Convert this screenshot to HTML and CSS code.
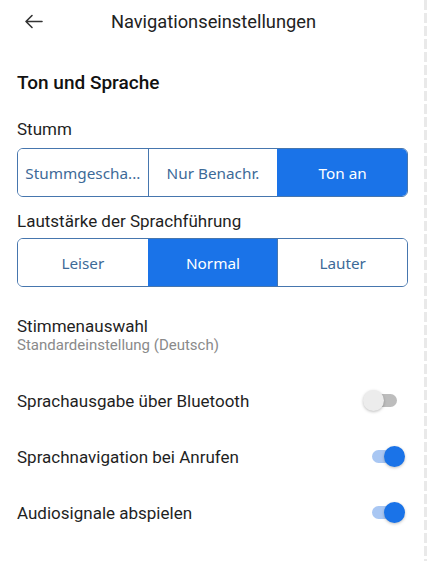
FILE: index.html
```html
<!DOCTYPE html>
<html lang="de">
<head>
  <meta charset="UTF-8">
  <title>Navigationseinstellungen</title>
  <link rel="stylesheet" href="styles.css">
</head>
<body>

  <header class="top-bar">
    <button class="back-btn" aria-label="Zurück">
      <svg width="19" height="15" viewBox="0 0 19 15">
        <path d="M18 7.5H2M8 1.5L2 7.5l6 6" fill="none" stroke="#333" stroke-width="1.6" stroke-linecap="round" stroke-linejoin="round"/>
      </svg>
    </button>
    <h1 class="title">Navigationseinstellungen</h1>
    <span></span>
  </header>

  <main class="settings">
    <h2 class="section-title">Ton und Sprache</h2>

    <p class="label label-first">Stumm</p>
    <div class="segmented">
      <button class="seg">Stummgescha...</button>
      <button class="seg">Nur Benachr.</button>
      <button class="seg active">Ton an</button>
    </div>

    <p class="label label-second">Lautstärke der Sprachführung</p>
    <div class="segmented">
      <button class="seg">Leiser</button>
      <button class="seg active">Normal</button>
      <button class="seg">Lauter</button>
    </div>

    <div class="voice">
      <p class="voice-name">Stimmenauswahl</p>
      <p class="voice-sub">Standardeinstellung (Deutsch)</p>
    </div>

    <div class="toggle-list">
      <div class="toggle-row">
        <span>Sprachausgabe über Bluetooth</span>
        <span class="switch"><span class="track"></span><span class="thumb"></span></span>
      </div>
      <div class="toggle-row">
        <span>Sprachnavigation bei Anrufen</span>
        <span class="switch on"><span class="track"></span><span class="thumb"></span></span>
      </div>
      <div class="toggle-row">
        <span>Audiosignale abspielen</span>
        <span class="switch on"><span class="track"></span><span class="thumb"></span></span>
      </div>
    </div>
  </main>

</body>
</html>
```

FILE: styles.css
```css
body {
  margin: 0;
  padding: 0;
  background: #fff;
  font-family: Roboto, 'Noto Sans', sans-serif;
  color: #1f1f1f;
}

/* scroll hint on the right edge */
body::after {
  content: '';
  position: fixed;
  top: 0;
  right: 0;
  bottom: 0;
  width: 3px;
  background: repeating-linear-gradient(to bottom, #e9e9e9 0 10px, transparent 10px 13px);
}

.top-bar {
  height: 42px;
  display: grid;
  grid-template-columns: 1fr auto 1fr;
  align-items: center;
}

.back-btn {
  justify-self: start;
  margin-left: 24px;
  padding: 0;
  border: none;
  background: none;
  display: flex;
}

.title {
  margin: 0;
  font-size: 18.3px;
  font-weight: 400;
  color: #222;
}

.settings {
  padding: 0 19px 0 17px;
}

.section-title {
  margin: 29px 0 0;
  font-size: 19px;
  font-weight: 500;
  line-height: 24px;
  color: #111;
}

.label {
  margin: 0;
  font-size: 17px;
  line-height: 20px;
}

.label-first {
  margin-top: 24px;
  margin-bottom: 9px;
}

.label-second {
  margin-top: 14px;
  margin-bottom: 7px;
}

.segmented {
  display: grid;
  grid-template-columns: 1fr 1fr 1fr;
  height: 49px;
  border: 1px solid #4676ae;
  border-radius: 6px;
  overflow: hidden;
  box-sizing: border-box;
}

.seg {
  border: none;
  border-left: 1px solid #4676ae;
  background: #fff;
  color: #3d6a98;
  font-family: 'Noto Sans', sans-serif;
  font-size: 15.3px;
  padding: 0;
  white-space: nowrap;
  overflow: hidden;
}

.seg:first-child {
  border-left: none;
}

.seg.active {
  background: #1a73e8;
  color: #fff;
  border-left-color: #1a73e8;
}

.voice {
  margin-top: 29px;
}

.voice-name {
  margin: 0;
  font-size: 17px;
  line-height: 20px;
}

.voice-sub {
  margin: 0;
  font-size: 15px;
  line-height: 18px;
  color: #8a8a8a;
}

.toggle-list {
  margin-top: 19px;
}

.toggle-row {
  height: 56px;
  display: flex;
  align-items: center;
  justify-content: space-between;
  font-size: 17px;
  padding-right: 3px;
}

.switch {
  position: relative;
  width: 43px;
  height: 22px;
}

.switch .track {
  position: absolute;
  left: 10px;
  right: 8px;
  top: 4px;
  height: 13px;
  border-radius: 7px;
  background: #bdbdbd;
}

.switch .thumb {
  position: absolute;
  left: 1px;
  top: 0;
  width: 21px;
  height: 21px;
  border-radius: 50%;
  background: #ececec;
  box-shadow: 0 1px 3px rgba(0, 0, 0, 0.25);
}

.switch.on .track {
  background: #a9c7f3;
}

.switch.on .thumb {
  left: auto;
  right: 0;
  background: #1a73e8;
}
```
